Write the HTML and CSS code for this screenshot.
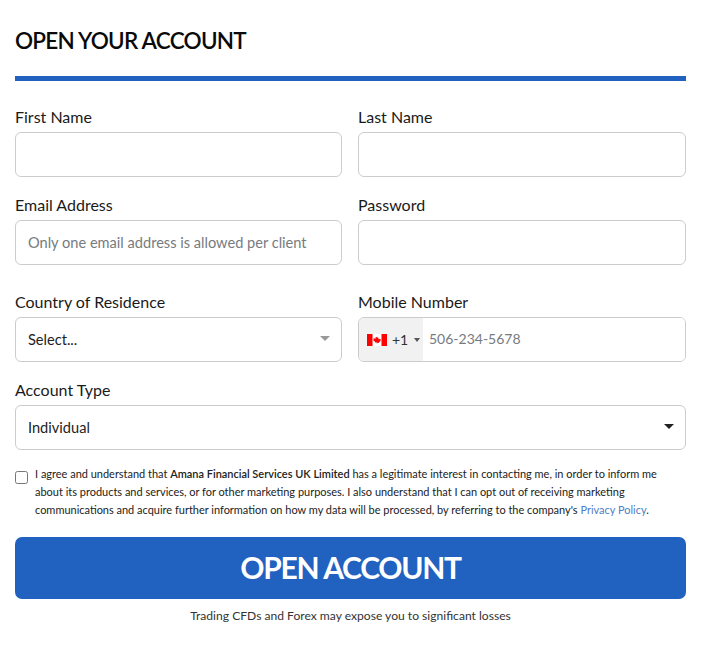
FILE: index.html
```html
<!DOCTYPE html>
<html lang="en">
<head>
    <meta charset="UTF-8">
    <meta name="viewport" content="width=device-width, initial-scale=1.0">
    <title>Open Your Account</title>
    <link rel="stylesheet" href="styles.css">
</head>
<body>
    <form class="signup">
        <h1 class="signup-title">OPEN YOUR ACCOUNT</h1>

        <div class="field-grid">
            <div class="field">
                <label for="firstName">First Name</label>
                <input class="control" id="firstName" type="text">
            </div>
            <div class="field">
                <label for="lastName">Last Name</label>
                <input class="control" id="lastName" type="text">
            </div>
            <div class="field">
                <label for="email">Email Address</label>
                <input class="control" id="email" type="text" placeholder="Only one email address is allowed per client">
            </div>
            <div class="field">
                <label for="password">Password</label>
                <input class="control" id="password" type="password">
            </div>
            <div class="field field-tall">
                <label for="country">Country of Residence</label>
                <div class="select-wrap">
                    <select class="control" id="country">
                        <option>Select...</option>
                    </select>
                    <span class="caret caret-muted"></span>
                </div>
            </div>
            <div class="field field-tall">
                <label for="mobile">Mobile Number</label>
                <div class="phone">
                    <div class="phone-code">
                        <svg class="flag" viewBox="0 0 20 12" width="20" height="12">
                            <rect width="20" height="12" fill="#fff"/>
                            <rect width="5.5" height="12" fill="#f00"/>
                            <rect x="14.5" width="5.5" height="12" fill="#f00"/>
                            <path d="M10 2.4l.8 1.5.8-.4-.3 2 1-.9.3.7 1.2-.2-.4 1.3.5.3-2 1.5.2.8-1.8-.2V9.6h-.6V8.3l-1.8.2.2-.8-2-1.5.5-.3-.4-1.3 1.2.2.3-.7 1 .9-.3-2 .8.4z" fill="#f00"/>
                        </svg>
                        <span>+1</span>
                        <span class="caret caret-small"></span>
                    </div>
                    <input class="phone-input" id="mobile" type="text" placeholder="506-234-5678">
                </div>
            </div>
            <div class="field field-wide">
                <label for="accountType">Account Type</label>
                <div class="select-wrap">
                    <select class="control" id="accountType">
                        <option>Individual</option>
                    </select>
                    <span class="caret caret-dark"></span>
                </div>
            </div>
        </div>

        <div class="consent">
            <input class="consent-box" type="checkbox" id="consent">
            <label for="consent">I agree and understand that <b>Amana Financial Services UK Limited</b> has a legitimate interest in contacting me, in order to inform me about its products and services, or for other marketing purposes. I also understand that I can opt out of receiving marketing communications and acquire further information on how my data will be processed, by referring to the company's <a href="#">Privacy Policy</a>.</label>
        </div>

        <button class="btn-open" type="button">OPEN ACCOUNT</button>
        <p class="risk">Trading CFDs and Forex may expose you to significant losses</p>
    </form>
</body>
</html>
```

FILE: styles.css
```css
* {
    margin: 0;
    padding: 0;
    box-sizing: border-box;
    font-family: 'Lato', 'Liberation Sans', sans-serif;
}

body {
    background-color: #fff;
    color: #111;
}

.signup {
    width: 705px;
    padding: 29px 19px 0 15px;
}

.signup-title {
    font-size: 22.5px;
    line-height: 24px;
    font-weight: 600;
    letter-spacing: -0.75px;
    color: #0a0a0a;
    padding-bottom: 23px;
    border-bottom: 5px solid #2161bf;
    margin-bottom: 26px;
}

.field-grid {
    display: grid;
    grid-template-columns: 327px 328px;
    column-gap: 16px;
}

.field {
    height: 88px;
}

.field-tall {
    height: 97px;
    padding-top: 9px;
}

.field-wide {
    grid-column: 1 / 3;
    height: 70px;
}

.field label {
    display: block;
    font-size: 16px;
    line-height: 20px;
    margin-bottom: 5px;
    color: #1a1a1a;
}

.control {
    display: block;
    width: 100%;
    height: 45px;
    padding: 0 12px 1px;
    border: 1px solid #ccc;
    border-radius: 6px;
    background-color: #fff;
    font-size: 14.6px;
    color: #222;
    appearance: none;
    outline: none;
}

.control::placeholder,
.phone-input::placeholder {
    color: #767b80;
    opacity: 1;
}

.select-wrap {
    position: relative;
}

.caret {
    position: absolute;
    top: 19px;
    right: 12px;
    width: 0;
    height: 0;
    border-left: 5px solid transparent;
    border-right: 5px solid transparent;
    border-top: 5px solid #222;
}

.caret-muted {
    border-top-color: #999;
}

.caret-small {
    position: static;
    margin-left: 6px;
    border-left-width: 3px;
    border-right-width: 3px;
    border-top: 4px solid #555;
}

.phone {
    display: flex;
    height: 45px;
    border: 1px solid #ccc;
    border-radius: 6px;
    overflow: hidden;
}

.phone-code {
    display: flex;
    align-items: center;
    width: 64px;
    padding-left: 8px;
    background-color: #f1f1f1;
    font-size: 14px;
    color: #333;
}

.flag {
    margin-right: 5px;
}

.phone-input {
    flex: 1;
    border: none;
    outline: none;
    padding: 0 0 2px 6px;
    font-size: 14px;
}

.consent {
    display: flex;
    margin-top: 15px;
    padding-bottom: 18px;
    padding-right: 20px;
}

.consent-box {
    flex: none;
    width: 13px;
    height: 13px;
    margin: 6px 7px 0 0;
}

.consent label {
    font-size: 10.97px;
    line-height: 18px;
    color: #222;
}

.consent b {
    font-weight: 600;
}

.consent a {
    color: #4f7cc6;
    text-decoration: none;
}

.btn-open {
    display: block;
    width: 100%;
    height: 62px;
    padding-bottom: 2px;
    border: none;
    border-radius: 7px;
    background-color: #2161bf;
    color: #fff;
    font-size: 30px;
    font-weight: 700;
    letter-spacing: -1.3px;
    cursor: pointer;
}

.risk {
    margin-top: 9px;
    text-align: center;
    font-size: 12.1px;
    line-height: 16px;
    color: #333;
}
```
